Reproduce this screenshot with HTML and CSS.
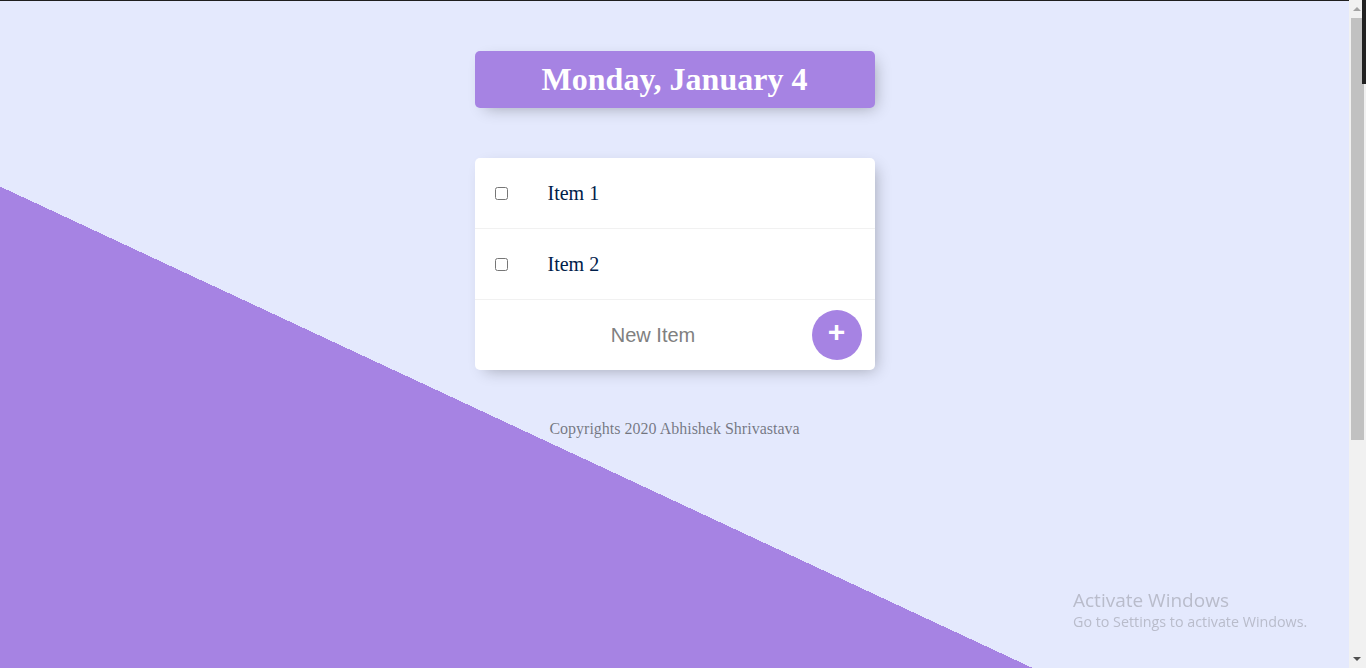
FILE: index.html
```html
<!DOCTYPE html>
<html lang="en">
<head>
<meta charset="utf-8">
<title>To Do List</title>
<link rel="stylesheet" href="styles.css">
</head>
<body>
  <div class="box heading">
    <h1 class="heading-title">Monday, January 4</h1>
  </div>

  <div class="box list">
    <div class="item">
      <input class="check" type="checkbox">
      <p class="item-text">Item 1</p>
    </div>
    <div class="item">
      <input class="check" type="checkbox">
      <p class="item-text">Item 2</p>
    </div>
    <form class="item new-form" action="#">
      <input class="new-input" type="text" name="newItem" placeholder="New Item" autocomplete="off"><button class="add-btn" type="button">+</button>
    </form>
  </div>

  <footer class="footer">Copyrights 2020 Abhishek Shrivastava</footer>

  <div class="activate">
    <div class="activate-title">Activate Windows</div>
    <div class="activate-sub">Go to Settings to activate Windows.</div>
  </div>

  <div class="fake-scrollbar" aria-hidden="true">
    <span class="sb-arrow sb-up"></span>
    <span class="sb-thumb"></span>
    <span class="sb-arrow sb-down"></span>
  </div>
  <div class="window-edge" aria-hidden="true"></div>
</body>
</html>
```

FILE: styles.css
```css
html {
  background-color: #E4E9FD;
  background-image: linear-gradient(25deg, #A683E3 50%, #E4E9FD 50%);
  min-height: 1000px;
  margin-right: 17px;
  border-top: 1px solid #1e1e1e;
  font-family: "Liberation Serif", "Times New Roman", serif;
}

body {
  margin: 0;
  padding: 0 8px 8px;
}

.box {
  max-width: 400px;
  margin: 50px auto;
  background: #ffffff;
  border-radius: 5px;
  box-shadow: 5px 5px 15px -5px rgba(0, 0, 0, 0.3);
}

.heading {
  background-color: #A683E3;
  text-align: center;
}

.heading-title {
  margin: 0;
  padding: 10px;
  color: #ffffff;
  font-size: 32px;
  font-weight: bold;
}

.item {
  min-height: 70px;
  display: flex;
  align-items: center;
  border-bottom: 1px solid #F1F1F1;
}

.item:last-child {
  border-bottom: 0;
}

.check {
  margin: 20px;
  width: 13px;
  height: 13px;
}

.item-text {
  margin: 0;
  padding: 20px;
  font-size: 20px;
  font-weight: 200;
  color: #00204a;
}

.new-form {
  margin: 0 0 0 20px;
}

.new-input {
  text-align: center;
  height: 60px;
  border: none;
  background: transparent;
  font-family: "Liberation Sans", Arial, sans-serif;
  font-size: 20px;
  font-weight: 200;
  width: 313px;
  padding: 1px 2px;
  margin: 0;
}

.new-input::placeholder {
  color: grey;
  opacity: 1;
}

.new-input:focus {
  outline: none;
  box-shadow: inset 0 -3px 0 0 #A683E3;
}

.add-btn {
  height: 50px;
  width: 50px;
  border-radius: 50%;
  border: 0;
  background-color: #A683E3;
  color: #ffffff;
  font-family: "Liberation Sans", Arial, sans-serif;
  font-size: 30px;
  font-weight: bold;
  padding: 0 0 6px 0;
  margin: 0;
  line-height: 1;
}

.footer {
  color: rgba(0, 0, 0, 0.5);
  text-align: center;
  font-size: 16px;
}

.activate {
  position: fixed;
  left: 1073px;
  top: 588px;
  font-family: "Open Sans", "Noto Sans", sans-serif;
  color: #b9bccb;
}

.activate-title {
  font-size: 19px;
  line-height: 24px;
}

.activate-sub {
  font-size: 14.3px;
  line-height: 20px;
}

.fake-scrollbar {
  position: fixed;
  top: 0;
  right: 0;
  width: 17px;
  height: 100%;
  background: #F1F1F1;
}

.sb-thumb {
  position: absolute;
  left: 2px;
  right: 2px;
  top: 18px;
  height: 422px;
  background: #C1C1C1;
}

.sb-arrow {
  position: absolute;
  left: 4px;
  width: 0;
  height: 0;
  border-left: 4px solid transparent;
  border-right: 4px solid transparent;
}

.sb-up {
  top: 7px;
  border-bottom: 4px solid #A3A3A3;
}

.sb-down {
  bottom: 7px;
  border-top: 4px solid #505050;
}

.window-edge {
  position: fixed;
  top: 0;
  right: 0;
  width: 4px;
  height: 84px;
  background: #222222;
}
```
